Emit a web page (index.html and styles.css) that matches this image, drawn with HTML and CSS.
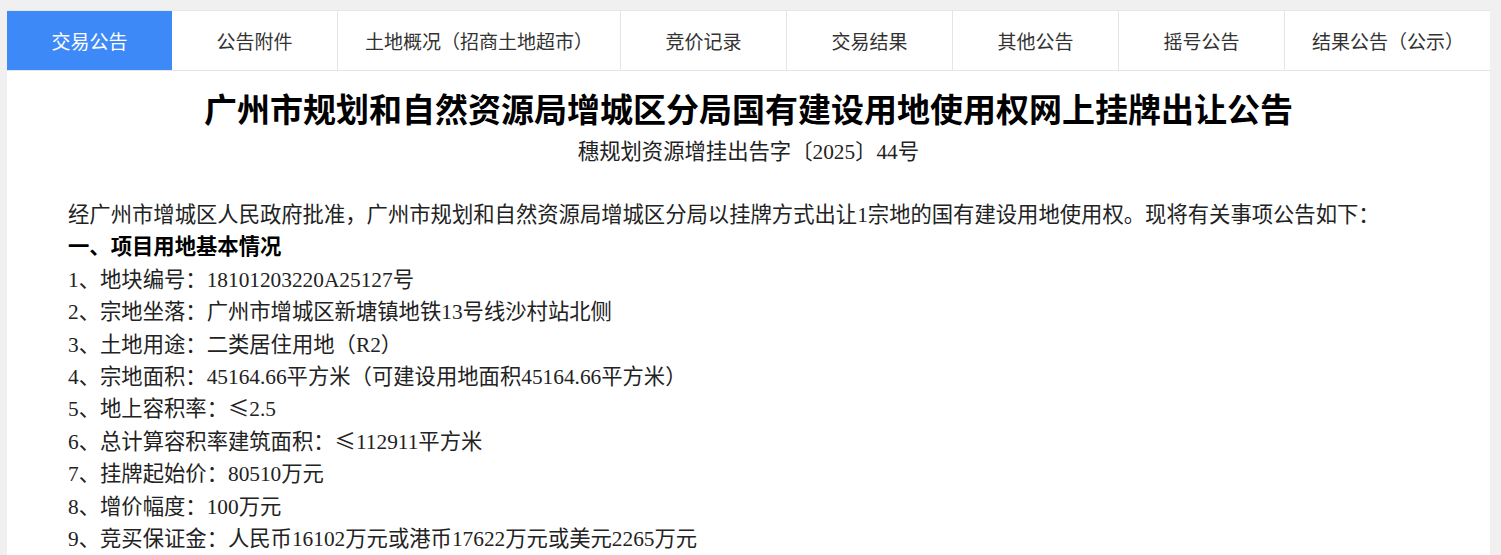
FILE: index.html
```html
<!DOCTYPE html>
<html lang="zh-CN">
<head>
    <meta charset="UTF-8">
    <meta name="viewport" content="width=device-width, initial-scale=1.0">
    <link rel="stylesheet" href="styles.css">
    <title>交易公告</title>
</head>
<body>
    <div class="panel">
        <ul class="tabs">
            <li class="tab active">交易公告</li>
            <li class="tab">公告附件</li>
            <li class="tab">土地概况（招商土地超市）</li>
            <li class="tab">竞价记录</li>
            <li class="tab">交易结果</li>
            <li class="tab">其他公告</li>
            <li class="tab">摇号公告</li>
            <li class="tab last">结果公告（公示）</li>
        </ul>
        <div class="notice">
            <h1 class="notice-title">广州市规划和自然资源局增城区分局国有建设用地使用权网上挂牌出让公告</h1>
            <p class="notice-no">穗规划资源增挂出告字〔2025〕44号</p>
            <div class="notice-body">
                <p>经广州市增城区人民政府批准，广州市规划和自然资源局增城区分局以挂牌方式出让1宗地的国有建设用地使用权。现将有关事项公告如下：</p>
                <p class="section">一、项目用地基本情况</p>
                <p>1、地块编号：18101203220A25127号</p>
                <p>2、宗地坐落：广州市增城区新塘镇地铁13号线沙村站北侧</p>
                <p>3、土地用途：二类居住用地（R2）</p>
                <p>4、宗地面积：45164.66平方米（可建设用地面积45164.66平方米）</p>
                <p>5、地上容积率：<span class="sym">≤</span>2.5</p>
                <p>6、总计算容积率建筑面积：<span class="sym">≤</span>112911平方米</p>
                <p>7、挂牌起始价：80510万元</p>
                <p>8、增价幅度：100万元</p>
                <p>9、竞买保证金：人民币16102万元或港币17622万元或美元2265万元</p>
            </div>
        </div>
    </div>
</body>
</html>
```

FILE: styles.css
```css
body {
    margin: 0;
    padding: 10px 11px 0 7px;
    background-color: #f0f0f0;
    font-family: "Liberation Serif", "Noto Sans CJK SC", serif;
    height: 545px;
    overflow: hidden;
}

.panel {
    background-color: #ffffff;
    border-top: 1px solid #e6e6ec;
    height: 545px;
}

.tabs {
    display: flex;
    margin: 0;
    padding: 0;
    list-style: none;
    border-bottom: 1px solid #e4e4ea;
}

.tab {
    box-sizing: border-box;
    min-width: 166px;
    height: 59px;
    padding: 0 27px;
    display: flex;
    align-items: center;
    justify-content: center;
    border-right: 1px solid #e4e4ea;
    font-family: "Noto Sans CJK SC", sans-serif;
    font-size: 19px;
    color: #333333;
}

.tab.active {
    min-width: 165px;
    background-color: #3d89f7;
    color: #ffffff;
    border-right: 0;
}

.tab.last {
    flex: 1;
    border-right: 0;
}

.notice {
    padding: 20px 0 0 61px;
}

.notice-title {
    margin: 0 0 0 -61px;
    text-align: center;
    font-size: 33px;
    line-height: 40px;
    font-weight: bold;
    color: #000000;
}

.notice-no {
    margin: 5px 0 0 -61px;
    text-align: center;
    font-size: 21.33px;
    line-height: 32px;
    color: #222222;
}

.notice-body {
    margin-top: 31px;
    font-size: 21.33px;
    line-height: 32.4px;
    color: #222222;
}

.notice-body p {
    margin: 0;
}

.notice-body .section {
    font-weight: bold;
    color: #000000;
}

.sym {
    font-family: "Noto Sans CJK SC", sans-serif;
    line-height: 0;
}
```
